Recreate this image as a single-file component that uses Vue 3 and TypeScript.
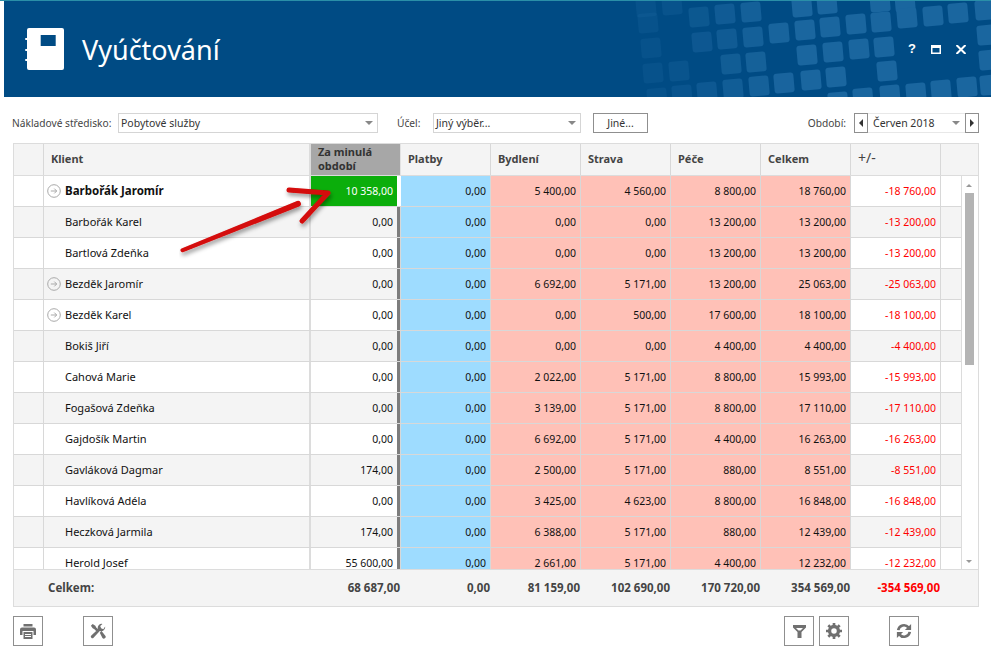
<script setup lang="ts">
interface Row { name: string; prev: string; pay: string; bed: string; food: string; care: string; sum: string; diff: string; exp: boolean }
const r = (name: string, prev: string, bed: string, food: string, care: string, sum: string, diff: string, exp = false): Row => ({ name, prev, pay: '0,00', bed, food, care, sum, diff, exp })
const rows: Row[] = [
  r('Barbořák Jaromír', '10 358,00', '5 400,00', '4 560,00', '8 800,00', '18 760,00', '-18 760,00', true),
  r('Barbořák Karel', '0,00', '0,00', '0,00', '13 200,00', '13 200,00', '-13 200,00'),
  r('Bartlová Zdeňka', '0,00', '0,00', '0,00', '13 200,00', '13 200,00', '-13 200,00'),
  r('Bezděk Jaromír', '0,00', '6 692,00', '5 171,00', '13 200,00', '25 063,00', '-25 063,00', true),
  r('Bezděk Karel', '0,00', '0,00', '500,00', '17 600,00', '18 100,00', '-18 100,00', true),
  r('Bokiš Jiří', '0,00', '0,00', '0,00', '4 400,00', '4 400,00', '-4 400,00'),
  r('Cahová Marie', '0,00', '2 022,00', '5 171,00', '8 800,00', '15 993,00', '-15 993,00'),
  r('Fogašová Zdeňka', '0,00', '3 139,00', '5 171,00', '8 800,00', '17 110,00', '-17 110,00'),
  r('Gajdošík Martin', '0,00', '6 692,00', '5 171,00', '4 400,00', '16 263,00', '-16 263,00'),
  r('Gavláková Dagmar', '174,00', '2 500,00', '5 171,00', '880,00', '8 551,00', '-8 551,00'),
  r('Havlíková Adéla', '0,00', '3 425,00', '4 623,00', '8 800,00', '16 848,00', '-16 848,00'),
  r('Heczková Jarmila', '174,00', '6 388,00', '5 171,00', '880,00', '12 439,00', '-12 439,00'),
  r('Herold Josef', '55 600,00', '2 661,00', '5 171,00', '4 400,00', '12 232,00', '-12 232,00'),
]
const coords: [number, number][] = [
  [636,-3],[662,-5],[638,13],[641,38],[643,63],[647,88],
  [689,7],[715,4],[741,2],[792,-3],[817,-6],[870,-8],[895,-8],
  [692,32],[717,29],[743,27],[769,23],[795,20],[820,17],[846,14],[871,12],[897,8],[923,6],[948,3],[975,0],
  [797,45],[823,42],[849,39],[874,37],[977,25],
  [721,54],[746,52],[979,50],
  [669,61],[877,61],[801,70],[774,73],[826,67],
  [749,76],[723,79],[697,82],[672,85],
  [980,75],[957,77],[931,80],[906,83],[880,85],[853,88],[828,92],
]
const squares = coords.map(([x, y]) => ({
  x, y,
  o: Math.max(0.25, Math.min(1, (x - 610) / 170)),
  t: `rotate(-5 ${x + 10} ${y + 10})`,
}))
</script>

<template>
  <div class="page">
    <header class="banner">
      <svg class="pattern" viewBox="4 1 987 96" width="987" height="96" aria-hidden="true">
        <rect v-for="(s, i) in squares" :key="i" :x="s.x" :y="s.y" width="20" height="20" rx="3" fill="#1a669f" :opacity="s.o" :transform="s.t" />
      </svg>
      <svg class="logo" viewBox="0 0 40 42" width="40" height="42" aria-hidden="true">
        <path fill="#fff" fill-rule="evenodd" d="M4 0h33a2 2 0 0 1 2 2v38a2 2 0 0 1-2 2H4a2 2 0 0 1-2-2V2a2 2 0 0 1 2-2zM15.700 7v11h15V7z" />
        <path stroke="#fff" stroke-width="2" stroke-linecap="round" d="M1 11h3M1 22h3M1 32h3" />
      </svg>
      <h1 class="title">Vyúčtování</h1>
      <div class="win">
        <span class="help">?</span>
        <svg width="10" height="9" viewBox="0 0 10 9" aria-hidden="true"><path fill="#fff" fill-rule="evenodd" d="M0 0h10v9H0zM1.500 3v4.500h7V3z" /></svg>
        <svg width="10" height="9" viewBox="0 0 10 9" aria-hidden="true"><path stroke="#fff" stroke-width="2" d="M.5 0l9 9M9.500 0l-9 9" /></svg>
      </div>
    </header>

    <div class="filters">
      <label class="lbl cost-lbl">Nákladové středisko:</label>
      <div class="select w-cost"><span>Pobytové služby</span><i class="caret"></i></div>
      <label class="lbl purpose">Účel:</label>
      <div class="select w-purpose"><span>Jiný výběr...</span><i class="caret"></i></div>
      <button class="other">Jiné...</button>
      <div class="period">
        <label class="lbl">Období:</label>
        <span class="step"><i class="tri left"></i></span>
        <div class="month"><span>Červen 2018</span><i class="caret"></i></div>
        <span class="step"><i class="tri right"></i></span>
      </div>
    </div>

    <section class="grid">
      <div class="row head">
        <div class="c gutter"></div>
        <div class="c name">Klient</div>
        <div class="c prev">Za minulá<br />období</div>
        <div class="c n">Platby</div>
        <div class="c n">Bydlení</div>
        <div class="c n">Strava</div>
        <div class="c n">Péče</div>
        <div class="c n">Celkem</div>
        <div class="c n diff">+/-</div>
        <div class="c end"></div>
      </div>
      <div class="viewport">
        <div class="rows">
          <div v-for="(x, i) in rows" :key="x.name" class="row item">
            <div class="c gutter"></div>
            <div class="c name" :class="{ bold: i === 0 }">
              <svg v-if="x.exp" class="exp" viewBox="0 0 14 14" width="14" height="14" aria-hidden="true">
                <circle cx="7" cy="7" r="6.300" fill="none" stroke="#a9a9a9" />
                <path d="M3.800 7h5.800M7.300 4.600L9.700 7 7.300 9.400" fill="none" stroke="#a9a9a9" />
              </svg>
              <span>{{ x.name }}</span>
            </div>
            <div class="c num prevv" :class="{ green: i === 0 }">{{ x.prev }}</div>
            <div class="c num blue">{{ x.pay }}</div>
            <div class="c num pink">{{ x.bed }}</div>
            <div class="c num pink">{{ x.food }}</div>
            <div class="c num pink">{{ x.care }}</div>
            <div class="c num pink">{{ x.sum }}</div>
            <div class="c num red">{{ x.diff }}</div>
            <div class="c end"></div>
          </div>
        </div>
        <div class="scroll">
          <i class="up"></i>
          <div class="thumb"></div>
          <i class="down"></i>
        </div>
        <svg class="arrows" viewBox="0 0 220 90" width="220" height="90" aria-hidden="true">
          <defs>
            <filter id="sh" x="-20%" y="-20%" width="140%" height="140%"><feDropShadow dx="1" dy="3" stdDeviation="2" flood-color="#000" flood-opacity="0.4" /></filter>
          </defs>
          <g filter="url(#sh)">
            <path fill="#d40808" d="M2.500 72.500L118 25a2.800 2.800 0 0 1 2 5.500L4.500 76a2 2 0 0 1-2-3.500z" />
            <path fill="none" stroke="#d40808" stroke-width="5" stroke-linecap="round" stroke-linejoin="round" d="M110 14L149 17L123 45" />
          </g>
        </svg>
      </div>
      <div class="row foot">
        <div class="c gutter"></div>
        <div class="c name">Celkem:</div>
        <div class="c num prevf">68 687,00</div>
        <div class="c num">0,00</div>
        <div class="c num">81 159,00</div>
        <div class="c num">102 690,00</div>
        <div class="c num">170 720,00</div>
        <div class="c num">354 569,00</div>
        <div class="c num red">-354 569,00</div>
        <div class="c end"></div>
      </div>
    </section>

    <div class="tools">
      <button class="tool">
        <svg width="16" height="15" viewBox="0 0 16 15" aria-hidden="true"><path fill="#707070" fill-rule="evenodd" d="M3.500 0h9v2.500h-9zM2 3.500h12a2 2 0 0 1 2 2V11h-2.500V7h-11v4H0V5.500a2 2 0 0 1 2-2zM3.500 8h9v7h-9zM5 10v1h6v-1zM5 12v1h6v-1z" /></svg>
      </button>
      <button class="tool wrench">
        <svg width="16" height="16" viewBox="0 0 18 18" aria-hidden="true"><path fill="#707070" d="M1 3l2-2 3 2 1 2 3 3-2 2-3-3-2-1zM17 4a4.500 4.500 0 0 1-6 5L4 16.500a1.700 1.700 0 0 1-2.500-2.500L9 7a4.500 4.500 0 0 1 5-6l-2.500 2.500 1 2.500 2.500 1zM11 11l2-2 4 5a2 2 0 0 1-3 3z" /></svg>
      </button>
      <button class="tool filter">
        <svg width="13" height="13" viewBox="0 0 13 13" aria-hidden="true"><path fill="#707070" fill-rule="evenodd" d="M0 0h13v2.500L8.500 7V13h-4V7L0 2.500zM3 3l2.500 2.500h2L10 3z" /></svg>
      </button>
      <button class="tool gear">
        <svg width="16" height="16" viewBox="0 0 18 18" aria-hidden="true"><circle cx="9" cy="9" r="5" fill="none" stroke="#707070" stroke-width="3.800" /><path stroke="#707070" stroke-width="3" d="M9 0v3.500M9 14.500V18M0 9h3.500M14.500 9H18M2.600 2.600l2.500 2.500M12.900 12.900l2.500 2.500M15.400 2.600l-2.500 2.500M5.100 12.900l-2.500 2.500" /></svg>
      </button>
      <button class="tool refresh">
        <svg width="16" height="16" viewBox="0 0 18 18" aria-hidden="true"><path fill="none" stroke="#707070" stroke-width="3" d="M2.500 8a6.500 6.500 0 0 1 11.500-3M15.500 10a6.500 6.500 0 0 1-11.500 3" /><path fill="#707070" d="M17 1v7h-7zM1 17v-7h7z" /></svg>
      </button>
    </div>
  </div>
</template>

<style scoped>
.page { position: relative; width: 991px; height: 658px; box-sizing: border-box; overflow: hidden; background: #fff; border-top: 1px solid #2a8fa8; font: 11px/1.2 "Noto Sans", "DejaVu Sans", sans-serif; color: #222; }
.banner { position: relative; margin-left: 4px; height: 96px; background: #004b84; display: flex; align-items: center; overflow: hidden; margin-bottom: 16px; }
.pattern { position: absolute; left: 0; top: 0; }
.logo { position: relative; margin: 0 0 0 21px; flex: none; }
.title { position: relative; margin: 0 0 0 17px; font: 400 27px/1 "Noto Sans", sans-serif; color: #fff; }
.win { position: absolute; right: 25px; top: 43px; display: flex; align-items: center; width: 58px; height: 10px; justify-content: space-between; }
.help { color: #fff; font: 700 13px/10px "Liberation Sans", sans-serif; }
.filters { display: flex; align-items: center; height: 20px; padding: 0 12px; margin-bottom: 10px; }
.lbl { color: #444; white-space: nowrap; font-size: 10.2px; }
.cost-lbl { width: 106px; flex: none; }
.select { display: flex; align-items: center; justify-content: space-between; box-sizing: border-box; height: 20px; border: 1px solid #d5d5d5; padding: 0 4px 0 2px; color: #333; background: #fff; font-size: 10.5px; }
.w-cost { width: 260px; }
.purpose { margin-left: 19px; width: 36px; flex: none; }
.w-purpose { width: 148px; }
.caret { width: 0; height: 0; border: 4px solid transparent; border-top: 4px solid #888; border-bottom: 0; }
.other { width: 55px; height: 20px; box-sizing: border-box; margin-left: 12px; background: #fff; border: 1px solid #8f8f8f; padding: 0; font: inherit; font-size: 10.5px; color: #333; }
.period { margin-left: auto; display: flex; align-items: center; }
.period .lbl { margin-right: 8px; }
.step { box-sizing: border-box; width: 14px; height: 20px; border: 1px solid #8f8f8f; display: flex; align-items: center; justify-content: center; }
.tri { width: 0; height: 0; border: 4px solid transparent; }
.tri.left { border-right: 4px solid #333; border-left: 0; }
.tri.right { border-left: 4px solid #333; border-right: 0; }
.month { box-sizing: border-box; width: 97px; height: 20px; display: flex; align-items: center; justify-content: space-between; padding: 0 5px; border-top: 1px solid #e8e8e8; border-bottom: 1px solid #e8e8e8; color: #333; font-size: 10.5px; }
.grid { margin-left: 13px; width: 966px; height: 464px; box-sizing: border-box; border: 1px solid #dcdcdc; display: flex; flex-direction: column; }
.row { display: flex; flex: none; }
.c { box-sizing: border-box; flex: none; width: 90px; border-right: 1px solid #d8d8d8; display: flex; align-items: center; padding: 0 3px 0 7px; }
.gutter { width: 30px; padding: 0; }
.name { width: 267px; border-right-width: 2px; border-right-color: #dcdcdc; }
.end { width: 39px; border-right: 0; padding: 0; }
.head { height: 31px; background: #f4f4f4; border-bottom: 1px solid #dcdcdc; box-sizing: content-box; font-weight: 700; color: #444; }
.head .c { padding-bottom: 2px; }
.head .prev { background: #a7a7a7; line-height: 14px; color: #333; border-right: 1px solid #e2e2e2; padding-bottom: 1px; }
.head .diff { font-weight: 400; font-size: 14px; }
.viewport { position: relative; flex: 1; min-height: 0; overflow: hidden; }
.rows { position: absolute; left: 0; top: 0; width: 964px; }
.item { height: 31px; box-sizing: border-box; border-bottom: 1px solid #d8d8d8; color: #111; background: #fff; font-size: 10.5px; }
.item:nth-child(even) { background: #f4f4f4; }
.item .name { padding-left: 21px; position: relative; font-size: 11px; }
.item .name.bold { font-weight: 700; color: #111; font-size: 11.5px; }
.exp { position: absolute; left: 3px; top: 8px; }
.num { justify-content: flex-end; padding: 0 4px 0 0; }
.prevv { box-shadow: inset -3px 0 0 #7d7d7d; padding-right: 7px; }
.green { background: #0bae0b; color: #fff; box-shadow: none; border-right: 4px solid #fff; padding-right: 4px; }
.blue { background: #9edcff; }
.pink { background: #ffc1b7; }
.red { color: #f00; }
.scroll { position: absolute; right: 0; top: 0; bottom: 0; width: 17px; background: #fff; border-left: 1px solid #dcdcdc; box-sizing: border-box; }
.thumb { position: absolute; left: 3px; top: 17px; width: 9px; height: 172px; background: #b4b4b4; }
.up, .down { position: absolute; left: 4px; width: 0; height: 0; border: 3px solid transparent; }
.up { top: 8px; border-bottom: 3px solid #999; border-top: 0; }
.down { bottom: 6px; border-top: 3px solid #999; border-bottom: 0; }
.arrows { position: absolute; left: 165px; top: 0; pointer-events: none; }
.foot { height: 37px; background: #f4f4f4; border-top: 1px solid #dcdcdc; box-sizing: border-box; font-weight: 700; color: #444; font-size: 11.5px; }
.foot .c { border-right: 0; padding-right: 1px; }
.foot .name { padding-left: 4px; font-size: 11.5px; }
.foot .red { color: #f00; }
.tools { position: relative; margin: 9px 0 0 13px; width: 906px; height: 30px; display: flex; }
.tool { box-sizing: border-box; width: 30px; height: 30px; background: #fff; border: 1px solid #8f8f8f; padding: 0; display: flex; align-items: center; justify-content: center; }
.wrench { margin-left: 40px; }
.filter { margin-left: auto; }
.gear { margin-left: 5px; }
.refresh { margin-left: 40px; }
</style>
